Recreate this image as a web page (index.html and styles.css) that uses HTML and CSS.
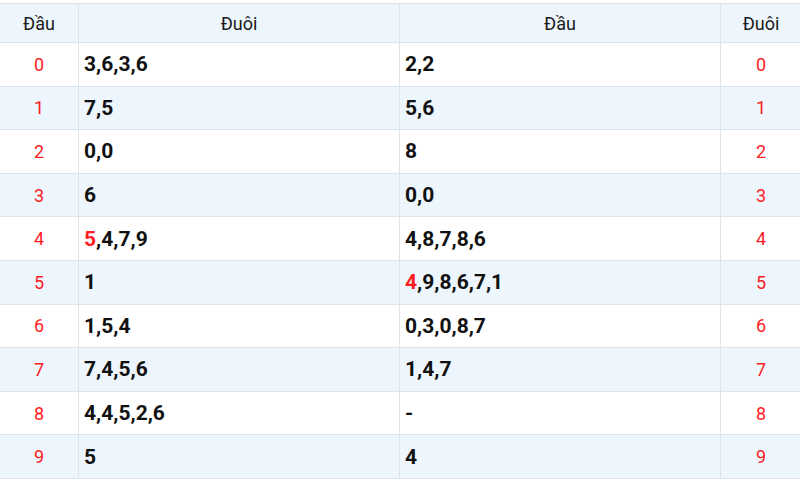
FILE: index.html
```html
<!DOCTYPE html>
<html>
<head>
<meta charset="utf-8">
<link rel="stylesheet" href="styles.css">
</head>
<body>
<table class="lt">
<colgroup>
<col class="w-num-l"><col class="w-val"><col class="w-val"><col class="w-num-r">
</colgroup>
<thead>
<tr><th>Đầu</th><th>Đuôi</th><th>Đầu</th><th>Đuôi</th></tr>
</thead>
<tbody>
<tr><td class="num">0</td><td class="val">3,6,3,6</td><td class="val">2,2</td><td class="num">0</td></tr>
<tr><td class="num">1</td><td class="val">7,5</td><td class="val">5,6</td><td class="num">1</td></tr>
<tr><td class="num">2</td><td class="val">0,0</td><td class="val">8</td><td class="num">2</td></tr>
<tr><td class="num">3</td><td class="val">6</td><td class="val">0,0</td><td class="num">3</td></tr>
<tr><td class="num">4</td><td class="val"><span class="hl">5</span>,4,7,9</td><td class="val">4,8,7,8,6</td><td class="num">4</td></tr>
<tr><td class="num">5</td><td class="val">1</td><td class="val"><span class="hl">4</span>,9,8,6,7,1</td><td class="num">5</td></tr>
<tr><td class="num">6</td><td class="val">1,5,4</td><td class="val">0,3,0,8,7</td><td class="num">6</td></tr>
<tr><td class="num">7</td><td class="val">7,4,5,6</td><td class="val">1,4,7</td><td class="num">7</td></tr>
<tr><td class="num">8</td><td class="val">4,4,5,2,6</td><td class="val">-</td><td class="num">8</td></tr>
<tr><td class="num">9</td><td class="val">5</td><td class="val">4</td><td class="num">9</td></tr>
</tbody>
</table>
</body>
</html>
```
FILE: styles.css
```css
html, body {
  margin: 0;
  padding: 0;
  background: #ffffff;
}
body {
  padding-top: 3px;
  font-family: Roboto, "Noto Sans", sans-serif;
}
.lt {
  width: 802px;
  margin-left: -1px;
  border-collapse: collapse;
  table-layout: fixed;
  font-size: 18px;
}
.w-num-l { width: 79px; }
.w-val { width: 321px; }
.w-num-r { width: 81px; }
.lt th, .lt td {
  border: 1px solid #dfe4ea;
  padding: 0 5px;
}
.lt thead tr { height: 39px; }
.lt th {
  background: #edf5fd;
  font-weight: 400;
  color: #1a1a1a;
  text-align: center;
}
.lt tbody tr { height: 43.6px; }
.lt tbody tr:nth-child(even) td { background: #edf5fd; }
.num {
  text-align: center;
  color: #fc1c24;
}
.val {
  font-size: 21px;
  font-weight: 700;
  color: #111;
}
.hl { color: #fc1c24; }
```
